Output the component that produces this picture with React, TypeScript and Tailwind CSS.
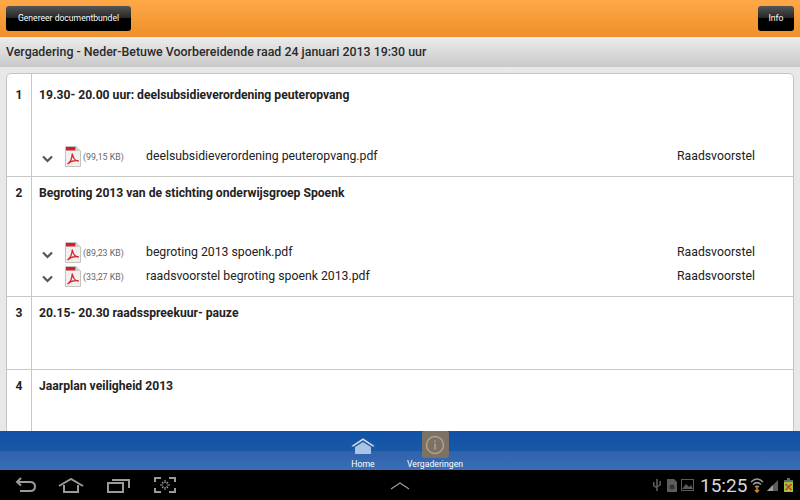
const agenda = [
  {
    nr: 1,
    title: '19.30- 20.00 uur: deelsubsidieverordening peuteropvang',
    height: 'h-[102px]',
    pad: 'pt-[14px]',
    docs: [{ size: '(99,15 KB)', name: 'deelsubsidieverordening peuteropvang.pdf', type: 'Raadsvoorstel' }],
  },
  {
    nr: 2,
    title: 'Begroting 2013 van de stichting onderwijsgroep Spoenk',
    height: 'h-[120px]',
    pad: 'pt-[9px]',
    docs: [
      { size: '(89,23 KB)', name: 'begroting 2013 spoenk.pdf', type: 'Raadsvoorstel' },
      { size: '(33,27 KB)', name: 'raadsvoorstel begroting spoenk 2013.pdf', type: 'Raadsvoorstel' },
    ],
  },
  { nr: 3, title: '20.15- 20.30 raadsspreekuur- pauze', height: 'h-[73px]', pad: 'pt-[9px]', docs: [] },
  { nr: 4, title: 'Jaarplan veiligheid 2013', height: 'h-[70px]', pad: 'pt-[9px]', docs: [] },
];

function PdfIcon() {
  return (
    <svg width="16" height="21" viewBox="0 0 16 21" className="shrink-0">
      <path d="M0.5 0.5H11L15.5 5V20.5H0.5Z" fill="#f2f0ee" stroke="#c4c1bf" />
      <path d="M11 0.5V5H15.5Z" fill="#d2d0ce" />
      <rect x="1" y="1" width="9.5" height="3.5" fill="#c9242b" />
      <path
        d="M2.5 18C5 16.5 7 12 7.3 7.5C7.8 12 10 14.8 13.8 15C10 14.2 5.5 15.3 2.5 18Z"
        fill="none"
        stroke="#d0262d"
        strokeWidth="1.3"
      />
    </svg>
  );
}

function BlackButton({ label, className }: { label: string; className: string }) {
  return (
    <button
      className={`h-[25px] rounded-[3px] bg-[linear-gradient(#555555_0%,#262626_48%,#000_50%,#000_100%)] text-[8.6px] text-white ${className}`}
    >
      {label}
    </button>
  );
}

export default function App() {
  return (
    <div className="w-[800px] h-[500px] flex flex-col overflow-hidden bg-[#e8e8e8] font-['Roboto',sans-serif] text-[#222]">
      {/* Header */}
      <div className="h-[37px] shrink-0 flex items-center justify-between px-[6px] bg-[linear-gradient(#ffa849,#ed9029)]">
        <BlackButton label="Genereer documentbundel" className="w-[125px]" />
        <BlackButton label="Info" className="w-[36px]" />
      </div>

      <div className="h-[30px] shrink-0 flex items-center pl-[6px] bg-[linear-gradient(#ececec,#c9c9c9)] text-[12.4px] font-medium text-[#2a2a2a]">
        Vergadering - Neder-Betuwe Voorbereidende raad 24 januari 2013 19:30 uur
      </div>

      {/* Agenda */}
      <div className="flex-1 min-h-0 overflow-hidden pt-[6px] px-[6px]">
        <div className="bg-white border border-[#c4c4c4] rounded-t-[5px]">
          {agenda.map((item, i) => (
            <div key={item.nr} className={`flex ${item.height} ${i > 0 ? 'border-t border-[#c8c8c8]' : ''}`}>
              <div className={`w-[25px] shrink-0 border-r border-[#c8c8c8] text-center text-[12px] font-bold leading-[14px] ${item.pad}`}>
                {item.nr}
              </div>
              <div className="flex-1 flex flex-col justify-between pl-[7px]">
                <div className={`text-[12.15px] font-bold leading-[14px] ${item.pad}`}>{item.title}</div>
                {item.docs.length > 0 && (
                  <div className="pb-[9px] flex flex-col gap-[3px]">
                    {item.docs.map((doc) => (
                      <div key={doc.name} className="h-[21px] flex items-center text-[12.25px]">
                        <svg width="11" height="8" viewBox="0 0 11 8" fill="none" stroke="#555" strokeWidth="2.2" className="ml-[3px] mr-[12px] mt-[4px]">
                          <path d="M1 1.5L5.5 6L10 1.5" />
                        </svg>
                        <PdfIcon />
                        <span className="w-[65px] pl-[2px] pt-[2px] text-[8.8px] text-[#666]">{doc.size}</span>
                        <span className="w-[531px]">{doc.name}</span>
                        <span>{doc.type}</span>
                      </div>
                    ))}
                  </div>
                )}
              </div>
            </div>
          ))}
        </div>
      </div>

      {/* Tab bar */}
      <div className="h-[39px] shrink-0 flex justify-center gap-[27px] pl-[13px] bg-[linear-gradient(#0f52a8_0%,#1a58a6_50%,#2f63ae_52%,#3a6db4_100%)] text-white text-[8.7px]">
        <div className="w-[30px] flex flex-col items-center">
          <svg width="26" height="18" viewBox="0 0 26 18" className="mt-[6px]">
            <path d="M1 9L13 1L25 9L23 10L13 3.5L3 10Z" fill="#dbe6f5" stroke="#123f80" strokeWidth="0.5" />
            <path d="M5 10L13 5L21 10V17H5Z" fill="#a9c4e6" />
          </svg>
          <span className="mt-[4px] leading-[11px]">Home</span>
        </div>
        <div className="w-[60px] flex flex-col items-center">
          <div className="w-[27px] h-[27px] rounded-[2px] bg-[#7a7167] flex items-center justify-center">
            <svg width="20" height="20" viewBox="0 0 20 20">
              <circle cx="10" cy="10" r="8.5" fill="none" stroke="#b89f7d" strokeWidth="1.5" />
              <rect x="9.2" y="8.5" width="1.6" height="6" fill="#b89f7d" />
              <rect x="9.2" y="5.5" width="1.6" height="1.6" fill="#b89f7d" />
            </svg>
          </div>
          <span className="mt-[1px] leading-[11px] whitespace-nowrap">Vergaderingen</span>
        </div>
      </div>

      {/* Android system bar */}
      <div className="h-[30px] shrink-0 flex items-center bg-black text-[#9a9a9a]">
        <svg width="21" height="16" viewBox="0 0 21 16" className="ml-[15px] mr-[22px]" fill="none" stroke="currentColor" strokeWidth="2">
          <path d="M6 1L2 5L6 8.5" />
          <path d="M2 5H15C18.5 5 20 7 20 9.5C20 12.5 18 14 15 14H5" />
        </svg>
        <svg width="26" height="15" viewBox="0 0 26 15" className="mr-[23px]" fill="none" stroke="currentColor" strokeWidth="2">
          <path d="M1 8L13 1L25 8" />
          <path d="M6 7V14H20V7" />
        </svg>
        <svg width="23" height="15" viewBox="0 0 23 15" className="mr-[24px]" fill="none" stroke="currentColor" strokeWidth="2">
          <rect x="1" y="5" width="15" height="9" />
          <path d="M5 2H22V10" />
        </svg>
        <svg width="22" height="16" viewBox="0 0 22 16" fill="none" stroke="currentColor" strokeWidth="2">
          <path d="M7 1H1V5M15 1H21V5M1 11V15H7M21 11V15H15" />
          <path d="M11 3V6M11 10V13M6 8H9M13 8H16M8 5L9.5 6.5M14 5L12.5 6.5M8 11L9.5 9.5M14 11L12.5 9.5" strokeWidth="1.2" />
        </svg>
        <svg width="20" height="9" viewBox="0 0 20 9" className="ml-[214px]" fill="none" stroke="currentColor" strokeWidth="1.2">
          <path d="M1 8L10 2L19 8" />
        </svg>
        <div className="ml-auto mr-[7px] flex items-center">
          <svg width="10" height="13" viewBox="0 0 10 13" fill="#5c5c5c" className="mr-[5px]">
            <path d="M4.2 0H5.8V12H4.2ZM1 3H2.5V6L4.5 8V9.5L1 7ZM7.5 2H9V6L5.5 8.5V7L7.5 5.5Z" />
          </svg>
          <svg width="10" height="13" viewBox="0 0 10 13" fill="#5c5c5c" className="mr-[4px]">
            <path d="M0 0H7L10 3V13H0Z" />
            <circle cx="5" cy="8" r="2.5" fill="#333" />
          </svg>
          <svg width="13" height="12" viewBox="0 0 13 12" className="mr-[6px]">
            <rect x="0.5" y="0.5" width="12" height="11" fill="none" stroke="#5c5c5c" />
            <path d="M1 10L5 5L8 8L10 6L12 10Z" fill="#5c5c5c" />
          </svg>
          <span className="w-[47px] text-[19px] leading-none text-[#d8d8d8] mr-[3px] whitespace-nowrap">15:25</span>
          <svg width="14" height="16" viewBox="0 0 14 16" fill="none" className="mr-[3px]">
            <path d="M1 5C5 1 9 1 13 5M3 7.5C5.5 5 8.5 5 11 7.5M5 10C6 9 8 9 9 10" stroke="#9a9a9a" strokeWidth="1.5" />
            <path d="M7 9V15M5 13L7 15L9 13" stroke="#d9861f" strokeWidth="1.5" />
          </svg>
          <svg width="12" height="11" viewBox="0 0 12 11" className="mr-[5px]">
            <path d="M0 11L11 0V11Z" fill="#5c5c5c" />
            <path d="M0 11L6 5V11Z" fill="#a0a0a0" />
          </svg>
          <svg width="9" height="14" viewBox="0 0 9 14">
            <rect x="3" y="0" width="3" height="2" fill="#6a6a6a" />
            <rect x="0" y="2" width="9" height="12" fill="#6a6a6a" />
            <rect x="0" y="4" width="9" height="10" fill="#9bc53d" />
            <path d="M1.5 6L7.5 12M7.5 6L1.5 12" stroke="#d8342c" strokeWidth="1.6" />
          </svg>
        </div>
      </div>
    </div>
  );
}
